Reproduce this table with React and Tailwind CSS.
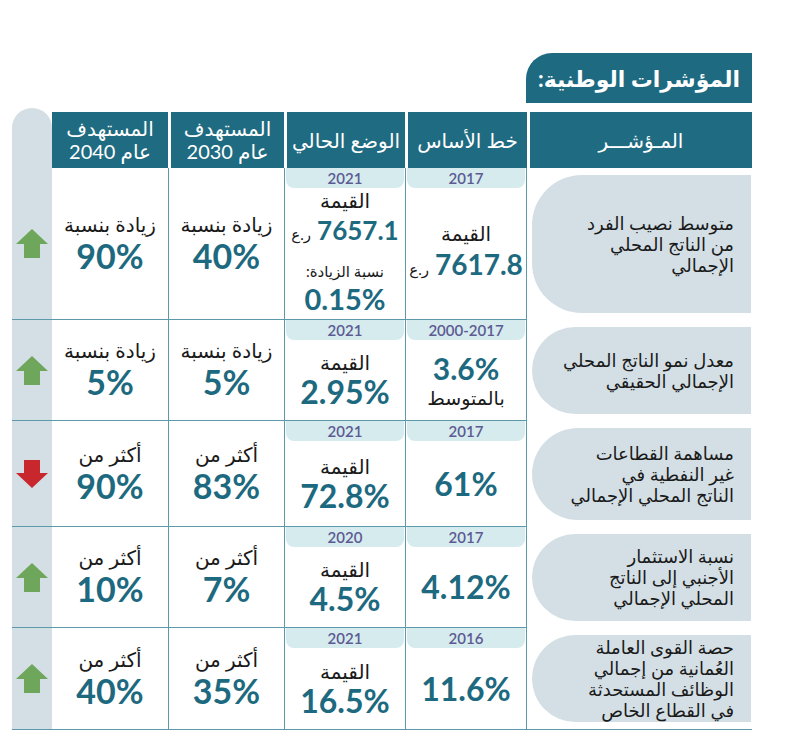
import React from "react";

function Arrow({ down }) {
  if (down) {
    return (
      <svg width="32" height="28" viewBox="0 0 32 28">
        <polygon points="8,0 24,0 24,13 32,13 16,28 0,13 8,13" fill="#c8272d" />
      </svg>
    );
  }
  return (
    <svg width="32" height="29" viewBox="0 0 32 29">
      <polygon points="16,0 32,15 24,15 24,29 8,29 8,15 0,15" fill="#6ea65b" />
    </svg>
  );
}

function Badge({ year }) {
  return (
    <div className="mx-[1px] h-[20px] shrink-0 rounded-b-[8px] bg-[#d5ebee] text-center text-[15px] font-semibold leading-[20px] text-[#5d5a92]">
      {year}
    </div>
  );
}

function Label({ children, size = "text-[20px] leading-[24px]" }) {
  return (
    <div dir="rtl" className={`${size} text-[#1a1a1a]`}>
      {children}
    </div>
  );
}

function Value({ children, className = "" }) {
  return (
    <div className={`font-bold text-[#1d6a80] ${className}`}>{children}</div>
  );
}

function Target({ label, value }) {
  return (
    <>
      <Label>{label}</Label>
      <Value className="text-[34px] leading-[40px]">{value}</Value>
    </>
  );
}

function Money({ value, size }) {
  return (
    <div className="flex items-baseline gap-[6px]">
      <span dir="rtl" className="text-[15px] text-[#1a1a1a]">ر.ع</span>
      <Value className={size}>{value}</Value>
    </div>
  );
}

function Simple({ year, label, value }) {
  return (
    <>
      <Badge year={year} />
      <div className="flex flex-1 flex-col items-center justify-center">
        {label && <Label>{label}</Label>}
        <Value className="text-[32px] leading-[36px]">{value}</Value>
      </div>
    </>
  );
}

function Row({ h, last, arrow, c40, c30, cur, base, ind }) {
  return (
    <div className={`flex ${h}`}>
      <div className="flex w-[40px] shrink-0 items-center justify-center border-b border-[#5d9aa9] bg-[#d3dfe5]">
        {arrow}
      </div>
      <div className="flex w-[116px] shrink-0 flex-col items-center justify-center border-b border-[#5d9aa9]">
        {c40}
      </div>
      <div className="flex w-[116px] shrink-0 flex-col items-center justify-center border-b border-l border-[#5d9aa9]">
        {c30}
      </div>
      <div className="flex w-[121px] shrink-0 flex-col border-b border-l border-[#5d9aa9]">
        {cur}
      </div>
      <div className="flex w-[122px] shrink-0 flex-col border-b border-l border-r border-[#5d9aa9]">
        {base}
      </div>
      <div className={`w-[225px] shrink-0 py-[7px] pl-[5px] pr-[1px] ${last ? "border-b border-[#5d9aa9]" : ""}`}>
        <div className="flex h-full items-center justify-end rounded-l-[50px] bg-[#d3dfe5] pr-[17px]">
          <div dir="rtl" className="text-right text-[18px] leading-[21px] text-[#1a1a1a]">
            {ind}
          </div>
        </div>
      </div>
    </div>
  );
}

function HeadCell({ w, first, children }) {
  return (
    <div className={`${w} shrink-0 ${first ? "" : "pl-[3px]"}`}>
      <div dir="rtl" className="flex h-[56px] flex-col items-center justify-center bg-[#1f6b81] text-center text-[20px] leading-[23px] text-white">
        {children}
      </div>
    </div>
  );
}

export default function App() {
  return (
    <div className="min-h-screen bg-white font-['Lato','DejaVu_Sans',sans-serif]">
      <div className="w-[752px] pt-[53px] pl-[12px]">
        <div className="flex justify-end">
          <div dir="rtl" className="flex h-[50px] w-[226px] items-center justify-center rounded-tl-[26px] bg-[#1e6a80] text-[22px] font-bold text-white">
            المؤشرات الوطنية:
          </div>
        </div>

        <div className="mt-[5px] flex">
          <div className="h-[60px] w-[40px] shrink-0 rounded-t-[20px] bg-[#d3dfe5]" />
          <div className="mt-[4px] flex">
            <HeadCell w="w-[116px]" first>
              <div>المستهدف</div>
              <div>عام 2040</div>
            </HeadCell>
            <HeadCell w="w-[116px]">
              <div>المستهدف</div>
              <div>عام 2030</div>
            </HeadCell>
            <HeadCell w="w-[121px]">الوضع الحالي</HeadCell>
            <HeadCell w="w-[122px]">خط الأساس</HeadCell>
            <HeadCell w="w-[225px]">المـؤشـــر</HeadCell>
          </div>
        </div>

        <Row
          h="h-[152px]"
          arrow={<Arrow />}
          c40={<Target label="زيادة بنسبة" value="90%" />}
          c30={<Target label="زيادة بنسبة" value="40%" />}
          cur={
            <>
              <Badge year="2021" />
              <div className="flex flex-col items-center">
                <Label>القيمة</Label>
                <Money value="7657.1" size="text-[26px] leading-[36px]" />
                <div className="mt-[13px]">
                  <Label size="text-[15px] leading-[20px]">نسبة الزيادة:</Label>
                </div>
                <Value className="text-[29px] leading-[36px]">0.15%</Value>
              </div>
            </>
          }
          base={
            <>
              <Badge year="2017" />
              <div className="flex flex-1 flex-col items-center justify-center pb-[4px]">
                <Label>القيمة</Label>
                <Money value="7617.8" size="text-[28px] leading-[38px]" />
              </div>
            </>
          }
          ind={
            <>
              <div>متوسط نصيب الفرد</div>
              <div>من الناتج المحلي</div>
              <div>الإجمالي</div>
            </>
          }
        />

        <Row
          h="h-[101px]"
          arrow={<Arrow />}
          c40={<Target label="زيادة بنسبة" value="5%" />}
          c30={<Target label="زيادة بنسبة" value="5%" />}
          cur={<Simple year="2021" label="القيمة" value="2.95%" />}
          base={
            <>
              <Badge year="2000-2017" />
              <div className="flex flex-1 flex-col items-center justify-center">
                <Value className="text-[30px] leading-[36px]">3.6%</Value>
                <Label size="text-[19px] leading-[24px]">بالمتوسط</Label>
              </div>
            </>
          }
          ind={
            <>
              <div>معدل نمو الناتج المحلي</div>
              <div>الإجمالي الحقيقي</div>
            </>
          }
        />

        <Row
          h="h-[106px]"
          arrow={<Arrow down />}
          c40={<Target label="أكثر من" value="90%" />}
          c30={<Target label="أكثر من" value="83%" />}
          cur={<Simple year="2021" label="القيمة" value="72.8%" />}
          base={<Simple year="2017" value="61%" />}
          ind={
            <>
              <div>مساهمة القطاعات</div>
              <div>غير النفطية في</div>
              <div>الناتج المحلي الإجمالي</div>
            </>
          }
        />

        <Row
          h="h-[101px]"
          arrow={<Arrow />}
          c40={<Target label="أكثر من" value="10%" />}
          c30={<Target label="أكثر من" value="7%" />}
          cur={<Simple year="2020" label="القيمة" value="4.5%" />}
          base={<Simple year="2017" value="4.12%" />}
          ind={
            <>
              <div>نسبة الاستثمار</div>
              <div>الأجنبي إلى الناتج</div>
              <div>المحلي الإجمالي</div>
            </>
          }
        />

        <Row
          h="h-[102px]"
          last
          arrow={<Arrow />}
          c40={<Target label="أكثر من" value="40%" />}
          c30={<Target label="أكثر من" value="35%" />}
          cur={<Simple year="2021" label="القيمة" value="16.5%" />}
          base={<Simple year="2016" value="11.6%" />}
          ind={
            <>
              <div>حصة القوى العاملة</div>
              <div>العُمانية من إجمالي</div>
              <div>الوظائف المستحدثة</div>
              <div>في القطاع الخاص</div>
            </>
          }
        />
      </div>
    </div>
  );
}
